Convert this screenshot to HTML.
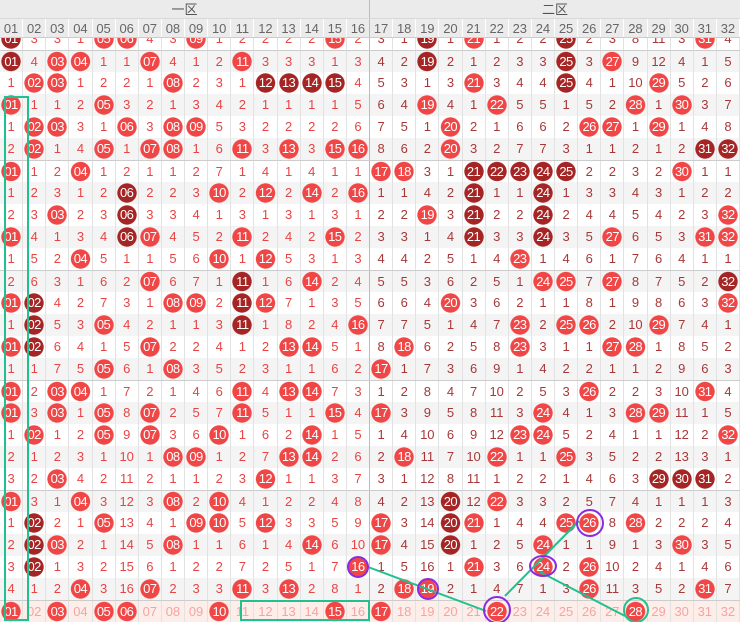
<!DOCTYPE html>
<html><head><meta charset="utf-8"><style>
*{margin:0;padding:0;box-sizing:border-box}
body{width:740px;height:622px;overflow:hidden;background:#fff;font-family:"Liberation Sans","Noto Sans CJK SC",sans-serif;position:relative}
.h1{position:absolute;left:0;top:0;width:740px;height:19px;background:#ebebeb;display:flex;border-bottom:1px solid #d8d8d8}
.h1 div{width:370px;text-align:center;font-size:13px;line-height:19px;color:#555}
.h1 div:first-child{border-right:1px solid #bbb}
.h2{position:absolute;left:0;top:19px;width:740px;height:19px;background:#ebebeb;display:flex;border-bottom:1px solid #ccc}
.h2 i{flex:0 0 23.125px;text-align:center;font-style:normal;font-size:13px;line-height:19px;color:#666;border-right:1px solid #fff}
.h2 i:nth-child(16){border-right:1px solid #bbb}
.d{position:absolute;left:0;top:38px;width:740px;height:584px;overflow:hidden}
.in{margin-top:-10px}
.r{display:flex;height:22px}
.r:nth-child(even){background:#f4f4f4}
.g{border-top:1px solid #ccc;height:22px}
.r>*{flex:0 0 23.125px;text-align:center;font-style:normal;font-weight:normal;text-decoration:none;font-size:13px;line-height:22px;color:#e84444;border-right:1px solid #e2e2e2}
.r>*:nth-child(n+17){color:#a83838}
.r>*:nth-child(16){border-right:1px solid #bbb}
.r>b,.r>s{color:#fff!important;letter-spacing:-.6px;background:radial-gradient(circle 10px at 50% 50%,#f04646 9.3px,transparent 10px)}
.r>s{background:radial-gradient(circle 10px at 50% 50%,#a52424 9.3px,transparent 10px)}
.f{background:#fdeee9!important}
.f>i{color:#f4a4a4!important}
svg{position:absolute;left:0;top:0}
</style></head><body>
<div class="h1"><div>一区</div><div>二区</div></div>
<div class="h2"><i>01</i><i>02</i><i>03</i><i>04</i><i>05</i><i>06</i><i>07</i><i>08</i><i>09</i><i>10</i><i>11</i><i>12</i><i>13</i><i>14</i><i>15</i><i>16</i><i>17</i><i>18</i><i>19</i><i>20</i><i>21</i><i>22</i><i>23</i><i>24</i><i>25</i><i>26</i><i>27</i><i>28</i><i>29</i><i>30</i><i>31</i><i>32</i></div>
<div class="d"><div class="in">
<div class="r" style="background:#fff"><s>01</s><i>3</i><i>3</i><i>1</i><b>05</b><b>06</b><i>4</i><i>3</i><b>09</b><i>1</i><i>2</i><i>2</i><i>2</i><i>2</i><b>15</b><i>2</i><i>3</i><i>1</i><s>19</s><i>1</i><b>21</b><i>1</i><i>2</i><i>2</i><s>25</s><i>2</i><i>3</i><i>8</i><i>11</i><i>3</i><b>31</b><i>4</i></div>
<div class="r g"><s>01</s><i>4</i><b>03</b><b>04</b><i>1</i><i>1</i><b>07</b><i>4</i><i>1</i><i>2</i><b>11</b><i>3</i><i>3</i><i>3</i><i>1</i><i>3</i><i>4</i><i>2</i><s>19</s><i>2</i><i>1</i><i>2</i><i>3</i><i>3</i><s>25</s><i>3</i><b>27</b><i>9</i><i>12</i><i>4</i><i>1</i><i>5</i></div>
<div class="r"><i>1</i><b>02</b><b>03</b><i>1</i><i>2</i><i>2</i><i>1</i><b>08</b><i>2</i><i>3</i><i>1</i><s>12</s><s>13</s><s>14</s><s>15</s><i>4</i><i>5</i><i>3</i><i>1</i><i>3</i><b>21</b><i>3</i><i>4</i><i>4</i><s>25</s><i>4</i><i>1</i><i>10</i><b>29</b><i>5</i><i>2</i><i>6</i></div>
<div class="r"><b>01</b><i>1</i><i>1</i><i>2</i><b>05</b><i>3</i><i>2</i><i>1</i><i>3</i><i>4</i><i>2</i><i>1</i><i>1</i><i>1</i><i>1</i><i>5</i><i>6</i><i>4</i><b>19</b><i>4</i><i>1</i><b>22</b><i>5</i><i>5</i><i>1</i><i>5</i><i>2</i><b>28</b><i>1</i><b>30</b><i>3</i><i>7</i></div>
<div class="r"><i>1</i><b>02</b><b>03</b><i>3</i><i>1</i><b>06</b><i>3</i><b>08</b><b>09</b><i>5</i><i>3</i><i>2</i><i>2</i><i>2</i><i>2</i><i>6</i><i>7</i><i>5</i><i>1</i><b>20</b><i>2</i><i>1</i><i>6</i><i>6</i><i>2</i><b>26</b><b>27</b><i>1</i><b>29</b><i>1</i><i>4</i><i>8</i></div>
<div class="r"><i>2</i><b>02</b><i>1</i><i>4</i><b>05</b><i>1</i><b>07</b><b>08</b><i>1</i><i>6</i><b>11</b><i>3</i><b>13</b><i>3</i><b>15</b><b>16</b><i>8</i><i>6</i><i>2</i><b>20</b><i>3</i><i>2</i><i>7</i><i>7</i><i>3</i><i>1</i><i>1</i><i>2</i><i>1</i><i>2</i><s>31</s><s>32</s></div>
<div class="r g"><b>01</b><i>1</i><i>2</i><b>04</b><i>1</i><i>2</i><i>1</i><i>1</i><i>2</i><i>7</i><i>1</i><i>4</i><i>1</i><i>4</i><i>1</i><i>1</i><b>17</b><b>18</b><i>3</i><i>1</i><s>21</s><s>22</s><s>23</s><s>24</s><s>25</s><i>2</i><i>2</i><i>3</i><i>2</i><b>30</b><i>1</i><i>1</i></div>
<div class="r"><i>1</i><i>2</i><i>3</i><i>1</i><i>2</i><s>06</s><i>2</i><i>2</i><i>3</i><b>10</b><i>2</i><b>12</b><i>2</i><b>14</b><i>2</i><b>16</b><i>1</i><i>1</i><i>4</i><i>2</i><s>21</s><i>1</i><i>1</i><s>24</s><i>1</i><i>3</i><i>3</i><i>4</i><i>3</i><i>1</i><i>2</i><i>2</i></div>
<div class="r"><i>2</i><i>3</i><b>03</b><i>2</i><i>3</i><s>06</s><i>3</i><i>3</i><i>4</i><i>1</i><i>3</i><i>1</i><i>3</i><i>1</i><i>3</i><i>1</i><i>2</i><i>2</i><b>19</b><i>3</i><s>21</s><i>2</i><i>2</i><s>24</s><i>2</i><i>4</i><i>4</i><i>5</i><i>4</i><i>2</i><i>3</i><b>32</b></div>
<div class="r"><b>01</b><i>4</i><i>1</i><i>3</i><i>4</i><s>06</s><b>07</b><i>4</i><i>5</i><i>2</i><b>11</b><i>2</i><i>4</i><i>2</i><b>15</b><i>2</i><i>3</i><i>3</i><i>1</i><i>4</i><s>21</s><i>3</i><i>3</i><s>24</s><i>3</i><i>5</i><b>27</b><i>6</i><i>5</i><i>3</i><b>31</b><b>32</b></div>
<div class="r"><i>1</i><i>5</i><i>2</i><b>04</b><i>5</i><i>1</i><i>1</i><i>5</i><i>6</i><b>10</b><i>1</i><b>12</b><i>5</i><i>3</i><i>1</i><i>3</i><i>4</i><i>4</i><i>2</i><i>5</i><i>1</i><i>4</i><b>23</b><i>1</i><i>4</i><i>6</i><i>1</i><i>7</i><i>6</i><i>4</i><i>1</i><i>1</i></div>
<div class="r g"><i>2</i><i>6</i><i>3</i><i>1</i><i>6</i><i>2</i><b>07</b><i>6</i><i>7</i><i>1</i><s>11</s><i>1</i><i>6</i><b>14</b><i>2</i><i>4</i><i>5</i><i>5</i><i>3</i><i>6</i><i>2</i><i>5</i><i>1</i><b>24</b><b>25</b><i>7</i><b>27</b><i>8</i><i>7</i><i>5</i><i>2</i><s>32</s></div>
<div class="r"><b>01</b><s>02</s><i>4</i><i>2</i><i>7</i><i>3</i><i>1</i><b>08</b><b>09</b><i>2</i><s>11</s><b>12</b><i>7</i><i>1</i><i>3</i><i>5</i><i>6</i><i>6</i><i>4</i><b>20</b><i>3</i><i>6</i><i>2</i><i>1</i><i>1</i><i>8</i><i>1</i><i>9</i><i>8</i><i>6</i><i>3</i><b>32</b></div>
<div class="r"><i>1</i><s>02</s><i>5</i><i>3</i><b>05</b><i>4</i><i>2</i><i>1</i><i>1</i><i>3</i><s>11</s><i>1</i><i>8</i><i>2</i><i>4</i><b>16</b><i>7</i><i>7</i><i>5</i><i>1</i><i>4</i><i>7</i><b>23</b><i>2</i><b>25</b><b>26</b><i>2</i><i>10</i><b>29</b><i>7</i><i>4</i><i>1</i></div>
<div class="r"><b>01</b><s>02</s><i>6</i><i>4</i><i>1</i><i>5</i><b>07</b><i>2</i><i>2</i><i>4</i><i>1</i><i>2</i><b>13</b><b>14</b><i>5</i><i>1</i><i>8</i><b>18</b><i>6</i><i>2</i><i>5</i><i>8</i><b>23</b><i>3</i><i>1</i><i>1</i><b>27</b><b>28</b><i>1</i><i>8</i><i>5</i><i>2</i></div>
<div class="r"><i>1</i><i>1</i><i>7</i><i>5</i><b>05</b><i>6</i><i>1</i><b>08</b><i>3</i><i>5</i><i>2</i><i>3</i><i>1</i><i>1</i><i>6</i><i>2</i><b>17</b><i>1</i><i>7</i><i>3</i><i>6</i><i>9</i><i>1</i><i>4</i><i>2</i><i>2</i><i>1</i><i>1</i><i>2</i><i>9</i><i>6</i><i>3</i></div>
<div class="r g"><b>01</b><i>2</i><b>03</b><b>04</b><i>1</i><i>7</i><i>2</i><i>1</i><i>4</i><i>6</i><b>11</b><i>4</i><b>13</b><b>14</b><i>7</i><i>3</i><i>1</i><i>2</i><i>8</i><i>4</i><i>7</i><i>10</i><i>2</i><i>5</i><i>3</i><b>26</b><i>2</i><i>2</i><i>3</i><i>10</i><b>31</b><i>4</i></div>
<div class="r"><b>01</b><i>3</i><b>03</b><i>1</i><b>05</b><i>8</i><b>07</b><i>2</i><i>5</i><i>7</i><b>11</b><i>5</i><i>1</i><i>1</i><b>15</b><i>4</i><b>17</b><i>3</i><i>9</i><i>5</i><i>8</i><i>11</i><i>3</i><b>24</b><i>4</i><i>1</i><i>3</i><b>28</b><b>29</b><i>11</i><i>1</i><i>5</i></div>
<div class="r"><i>1</i><b>02</b><i>1</i><i>2</i><b>05</b><i>9</i><b>07</b><i>3</i><i>6</i><b>10</b><i>1</i><i>6</i><i>2</i><b>14</b><i>1</i><i>5</i><i>1</i><i>4</i><i>10</i><i>6</i><i>9</i><i>12</i><b>23</b><b>24</b><i>5</i><i>2</i><i>4</i><i>1</i><i>1</i><i>12</i><i>2</i><b>32</b></div>
<div class="r"><i>2</i><i>1</i><i>2</i><i>3</i><i>1</i><i>10</i><i>1</i><b>08</b><b>09</b><i>1</i><i>2</i><i>7</i><b>13</b><b>14</b><i>2</i><i>6</i><i>2</i><b>18</b><i>11</i><i>7</i><i>10</i><b>22</b><i>1</i><i>1</i><b>25</b><i>3</i><i>5</i><i>2</i><i>2</i><i>13</i><i>3</i><i>1</i></div>
<div class="r"><i>3</i><i>2</i><b>03</b><i>4</i><i>2</i><i>11</i><i>2</i><i>1</i><i>1</i><i>2</i><i>3</i><b>12</b><i>1</i><i>1</i><i>3</i><i>7</i><i>3</i><i>1</i><i>12</i><i>8</i><i>11</i><i>1</i><i>2</i><i>2</i><i>1</i><i>4</i><i>6</i><i>3</i><s>29</s><s>30</s><s>31</s><i>2</i></div>
<div class="r g"><b>01</b><i>3</i><i>1</i><b>04</b><i>3</i><i>12</i><i>3</i><b>08</b><i>2</i><b>10</b><i>4</i><i>1</i><i>2</i><i>2</i><i>4</i><i>8</i><i>4</i><i>2</i><i>13</i><s>20</s><i>12</i><b>22</b><i>3</i><i>3</i><i>2</i><i>5</i><i>7</i><i>4</i><i>1</i><i>1</i><i>1</i><i>3</i></div>
<div class="r"><i>1</i><s>02</s><i>2</i><i>1</i><b>05</b><i>13</i><i>4</i><i>1</i><b>09</b><b>10</b><i>5</i><b>12</b><i>3</i><i>3</i><i>5</i><i>9</i><b>17</b><i>3</i><i>14</i><s>20</s><b>21</b><i>1</i><i>4</i><i>4</i><b>25</b><b>26</b><i>8</i><b>28</b><i>2</i><i>2</i><i>2</i><i>4</i></div>
<div class="r"><i>2</i><s>02</s><b>03</b><i>2</i><i>1</i><i>14</i><i>5</i><b>08</b><i>1</i><i>1</i><i>6</i><i>1</i><i>4</i><b>14</b><i>6</i><i>10</i><b>17</b><i>4</i><i>15</i><s>20</s><i>1</i><i>2</i><i>5</i><b>24</b><i>1</i><i>1</i><i>9</i><i>1</i><i>3</i><b>30</b><i>3</i><i>5</i></div>
<div class="r"><i>3</i><s>02</s><i>1</i><i>3</i><i>2</i><i>15</i><i>6</i><i>1</i><i>2</i><i>2</i><i>7</i><i>2</i><i>5</i><i>1</i><i>7</i><b>16</b><i>1</i><i>5</i><i>16</i><i>1</i><b>21</b><i>3</i><i>6</i><b>24</b><i>2</i><b>26</b><i>10</i><i>2</i><i>4</i><i>1</i><i>4</i><i>6</i></div>
<div class="r"><i>4</i><i>1</i><i>2</i><b>04</b><i>3</i><i>16</i><b>07</b><i>2</i><i>3</i><i>3</i><b>11</b><i>3</i><b>13</b><i>2</i><i>8</i><i>1</i><i>2</i><b>18</b><b>19</b><i>2</i><i>1</i><i>4</i><i>7</i><i>1</i><i>3</i><b>26</b><i>11</i><i>3</i><i>5</i><i>2</i><b>31</b><i>7</i></div>
<div class="r g f"><b>01</b><i>02</i><b>03</b><i>04</i><b>05</b><b>06</b><i>07</i><i>08</i><i>09</i><b>10</b><i>11</i><i>12</i><i>13</i><i>14</i><b>15</b><i>16</i><b>17</b><i>18</i><i>19</i><i>20</i><i>21</i><b>22</b><i>23</i><i>24</i><i>25</i><i>26</i><i>27</i><b>28</b><i>29</i><i>30</i><i>31</i><i>32</i></div>
</div></div>
<svg width="740" height="622" viewBox="0 0 740 622">
<g fill="none" stroke="#22c08e" stroke-width="2">
<rect x="5" y="97" width="23" height="523"/>
<rect x="241" y="601" width="128" height="19"/>
<line x1="368" y1="567" x2="486" y2="611"/>
<line x1="505" y1="596" x2="579" y2="521"/>
<line x1="540" y1="572" x2="625" y2="616"/>
<circle cx="636" cy="610" r="12"/>
</g>
<g fill="none" stroke="#8a2be2" stroke-width="2">
<circle cx="358" cy="567" r="10"/>
<circle cx="428" cy="589" r="10"/>
<circle cx="497" cy="610" r="13"/>
<ellipse cx="543" cy="566" rx="13" ry="10"/>
<circle cx="590" cy="523" r="13"/>
</g>
</svg>
</body></html>
